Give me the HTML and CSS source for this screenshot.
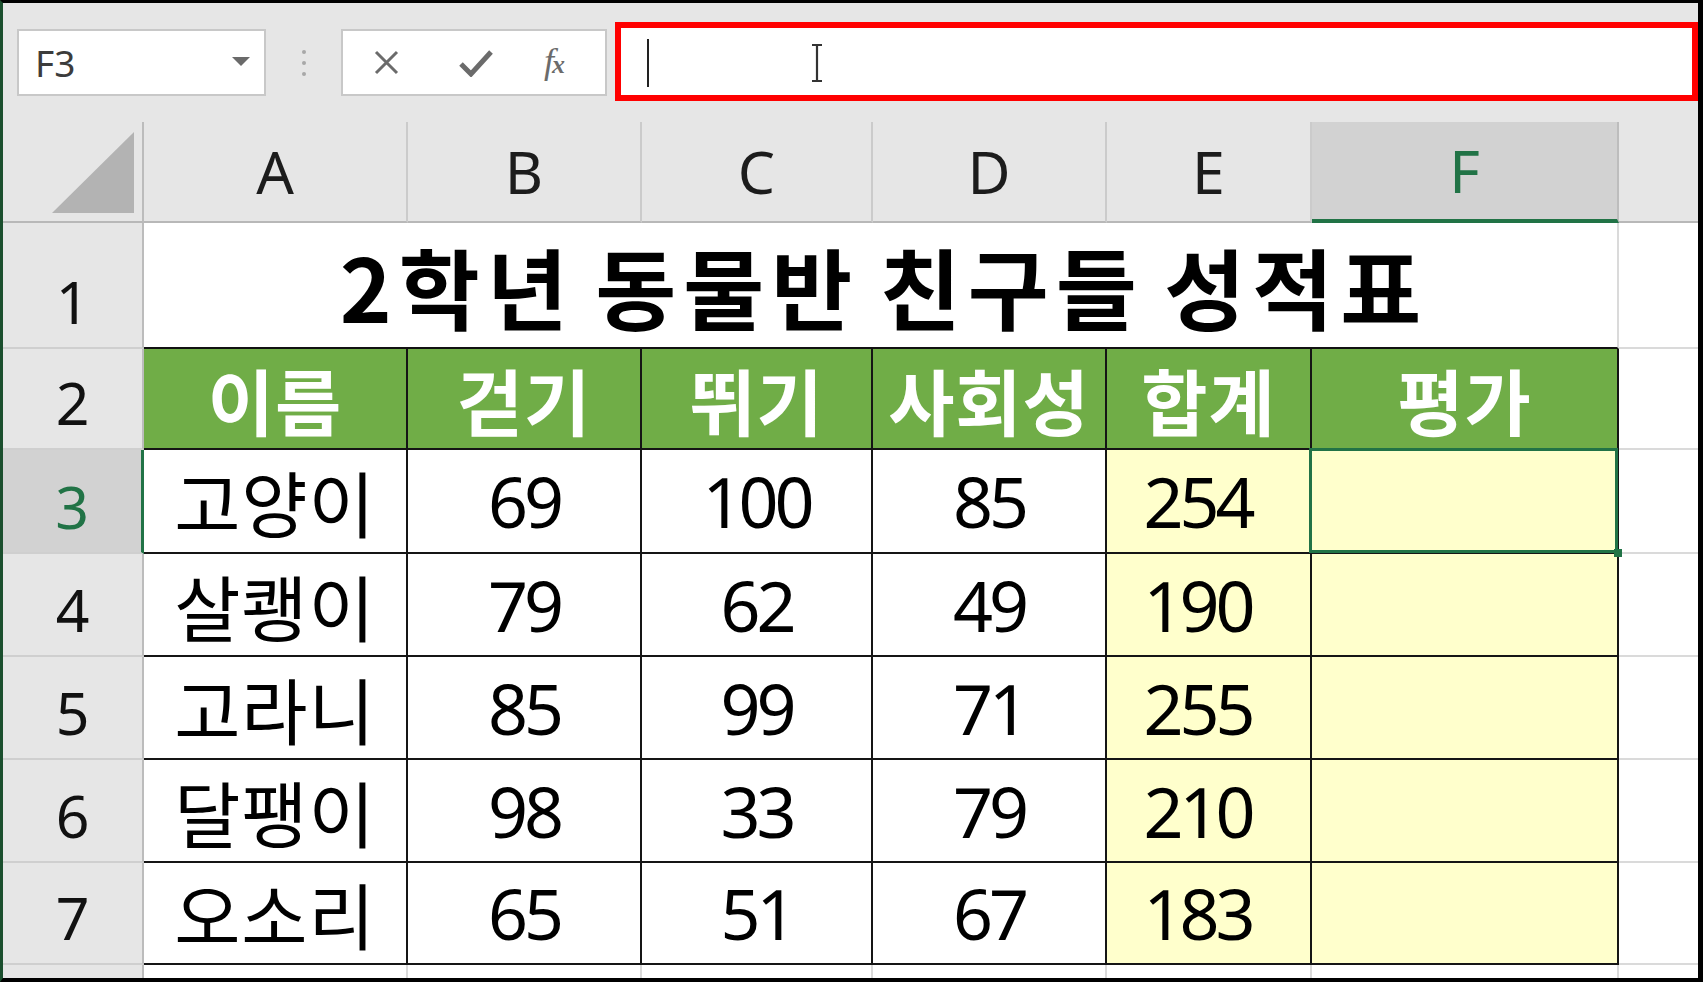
FILE: index.html
```html
<!DOCTYPE html>
<html lang="ko">
<head>
<meta charset="utf-8">
<title>2학년 동물반 친구들 성적표</title>
<link rel="stylesheet" href="styles.css">
</head>
<body>
<div class="window">
  <div class="toolbar">
    <div class="namebox">
      <span class="nb-text">F3</span>
      <svg class="nb-arrow" width="18" height="9" viewBox="0 0 18 9"><polygon points="0,0 18,0 9,9" fill="#6a6a6a"/></svg>
    </div>
    <div class="grip"><span></span><span></span><span></span></div>
    <div class="fbtns">
      <svg class="ic-x" width="27" height="27" viewBox="0 0 27 27"><path d="M3 3 L24 24 M24 3 L3 24" stroke="#6b6b6b" stroke-width="3" fill="none"/></svg>
      <svg class="ic-ok" width="36" height="28" viewBox="0 0 36 28"><path d="M3 15 L13 25 L33 3" stroke="#6b6b6b" stroke-width="5" fill="none" stroke-linejoin="miter"/></svg>
      <span class="fx"><i>f</i><i class="fx-x">x</i></span>
    </div>
    <div class="finput">
      <span class="caret"></span>
      <svg class="ibeam" width="12" height="40" viewBox="0 0 12 40"><path d="M1 2 H11 M6 2 V38 M1 38 H11" stroke="#333" stroke-width="2.2" fill="none"/></svg>
    </div>
  </div>

  <div class="sheet">
    <!-- column headers -->
    <div class="c corner"><svg width="82" height="81" viewBox="0 0 82 81"><polygon points="82,0 82,81 0,81" fill="#b3b3b3"/></svg></div>
    <div class="c ch">A</div>
    <div class="c ch">B</div>
    <div class="c ch">C</div>
    <div class="c ch">D</div>
    <div class="c ch">E</div>
    <div class="c ch on">F</div>
    <div class="c chx"></div>

    <!-- row 1 -->
    <div class="c rh">1</div>
    <div class="c title">2학년 동물반 친구들 성적표</div>
    <div class="c x"></div>

    <!-- row 2 -->
    <div class="c rh">2</div>
    <div class="c hd">이름</div>
    <div class="c hd">걷기</div>
    <div class="c hd">뛰기</div>
    <div class="c hd">사회성</div>
    <div class="c hd">합계</div>
    <div class="c hd">평가</div>
    <div class="c x"></div>

    <!-- row 3 -->
    <div class="c rh on">3</div>
    <div class="c d name">고양이</div>
    <div class="c d num">69</div>
    <div class="c d num">100</div>
    <div class="c d num">85</div>
    <div class="c d num sum">254</div>
    <div class="c d eval sel"><span class="selbox"></span><span class="handle"></span></div>
    <div class="c x"></div>

    <!-- row 4 -->
    <div class="c rh">4</div>
    <div class="c d name">살쾡이</div>
    <div class="c d num">79</div>
    <div class="c d num">62</div>
    <div class="c d num">49</div>
    <div class="c d num sum">190</div>
    <div class="c d eval"></div>
    <div class="c x"></div>

    <!-- row 5 -->
    <div class="c rh">5</div>
    <div class="c d name">고라니</div>
    <div class="c d num">85</div>
    <div class="c d num">99</div>
    <div class="c d num">71</div>
    <div class="c d num sum">255</div>
    <div class="c d eval"></div>
    <div class="c x"></div>

    <!-- row 6 -->
    <div class="c rh">6</div>
    <div class="c d name">달팽이</div>
    <div class="c d num">98</div>
    <div class="c d num">33</div>
    <div class="c d num">79</div>
    <div class="c d num sum">210</div>
    <div class="c d eval"></div>
    <div class="c x"></div>

    <!-- row 7 -->
    <div class="c rh">7</div>
    <div class="c d name">오소리</div>
    <div class="c d num">65</div>
    <div class="c d num">51</div>
    <div class="c d num">67</div>
    <div class="c d num sum">183</div>
    <div class="c d eval"></div>
    <div class="c x"></div>

    <!-- row 8 (partial) -->
    <div class="c rh"></div>
    <div class="c r8"></div>
    <div class="c r8"></div>
    <div class="c r8"></div>
    <div class="c r8"></div>
    <div class="c r8"></div>
    <div class="c r8"></div>
    <div class="c r8 last"></div>
  </div>
</div>
</body>
</html>
```

FILE: styles.css
```css
html, body {
  margin: 0;
  padding: 0;
  background: #ffffff;
}

body {
  font-family: "Noto Sans", "Noto Sans CJK KR", sans-serif;
}

.window {
  width: 1703px;
  height: 982px;
  box-sizing: border-box;
  border-top: 3px solid #000;
  border-right: 5px solid #000;
  border-bottom: 4px solid #000;
  border-left: 3px solid #1b4f2e;
  display: flex;
  flex-direction: column;
  overflow: hidden;
  background: #fff;
}

/* ---------- formula bar ---------- */
.toolbar {
  height: 119px;
  flex: none;
  box-sizing: border-box;
  background: #e6e6e6;
  display: flex;
  align-items: flex-start;
  padding: 26px 0 0 14px;
}

.namebox {
  width: 249px;
  height: 67px;
  box-sizing: border-box;
  border: 2px solid #c8c8c8;
  background: #fff;
  display: flex;
  align-items: center;
  padding: 0 14px 0 16px;
}

.nb-text {
  font-family: "Noto Sans", sans-serif;
  font-size: 37px;
  line-height: 1;
  color: #3c3c3c;
}

.nb-arrow {
  margin-left: auto;
  margin-top: -2px;
}

.grip {
  width: 75px;
  height: 67px;
  display: flex;
  flex-direction: column;
  align-items: center;
  justify-content: center;
  gap: 7px;
}

.grip span {
  width: 4px;
  height: 4px;
  border-radius: 50%;
  background: #a8a8a8;
}

.fbtns {
  width: 266px;
  height: 67px;
  box-sizing: border-box;
  border: 2px solid #c8c8c8;
  background: #fff;
  display: flex;
  align-items: center;
  padding-left: 30px;
}

.ic-ok {
  margin-left: 58px;
}

.fx {
  margin-left: 50px;
  font-family: "Liberation Serif", "DejaVu Serif", serif;
  font-size: 36px;
  color: #6b6b6b;
  line-height: 1;
  letter-spacing: -2px;
  margin-top: -4px;
}

.fx-x {
  font-size: 26px;
  font-weight: 700;
}

.finput {
  flex: 1;
  height: 79px;
  margin-left: 8px;
  margin-top: -7px;
  box-sizing: border-box;
  border: 6px solid #ff0000;
  background: #fff;
  display: flex;
  align-items: flex-start;
  padding-left: 26px;
}

.caret {
  width: 2px;
  height: 48px;
  margin-top: 11px;
  background: #222;
}

.ibeam {
  margin-left: 162px;
  margin-top: 15px;
}

/* ---------- sheet grid ---------- */
.sheet {
  flex: 1;
  display: grid;
  grid-template-columns: 141px 264px 234px 231px 234px 205px 307px 1fr;
  grid-template-rows: 101px 126px 101px 104px 103px 103px 103px 102px 1fr;
  min-height: 0;
}

.c {
  box-sizing: border-box;
  display: flex;
  align-items: center;
  justify-content: center;
  line-height: 1;
  min-width: 0;
  min-height: 0;
  white-space: nowrap;
}

.corner {
  background: #e6e6e6;
  border-right: 2px solid #bcbcbc;
  border-bottom: 2px solid #b8b8b8;
  align-items: flex-end;
  justify-content: flex-end;
  padding: 0 8px 8px 0;
}

.ch {
  background: #e6e6e6;
  border-right: 2px solid #cbcbcb;
  border-bottom: 2px solid #b8b8b8;
  font-size: 59px;
  color: #1c1c1c;
}

.ch.on {
  background: #d2d2d2;
  color: #217346;
  border-right-color: #bdbdbd;
  border-bottom: 4px solid #217346;
}

.chx {
  background: #e6e6e6;
  border-bottom: 2px solid #b8b8b8;
}

.rh {
  background: #e6e6e6;
  border-right: 2px solid #bcbcbc;
  border-bottom: 2px solid #cfcfcf;
  align-items: flex-end;
  padding-bottom: 16px;
  font-size: 59px;
  color: #111;
}

.rh.on {
  background: #d2d2d2;
  color: #217346;
  border-right: 3px solid #217346;
}

.title {
  grid-column: span 6;
  background: #fff;
  border-right: 2px solid #dadada;
  border-bottom: 2px solid #111;
  font-family: "Noto Sans CJK KR", "Noto Sans", sans-serif;
  font-size: 88px;
  font-weight: 700;
  letter-spacing: 7px;
  word-spacing: -11px;
  padding-left: 7px;
  color: #000;
}

.hd {
  background: #70ad47;
  color: #fff;
  font-family: "Noto Sans CJK KR", sans-serif;
  font-weight: 700;
  font-size: 72px;
  letter-spacing: 1px;
  border-right: 2px solid #151515;
  border-bottom: 2px solid #151515;
}

.d {
  background: #fff;
  border-right: 2px solid #151515;
  border-bottom: 2px solid #151515;
  color: #000;
}

.name {
  font-family: "Noto Sans CJK KR", sans-serif;
  font-size: 72px;
  letter-spacing: 1px;
}

.num {
  font-family: "Noto Sans", sans-serif;
  font-size: 70px;
  letter-spacing: -4px;
}

.sum {
  background: #ffffcc;
  padding-right: 22px;
}

.eval {
  background: #ffffcc;
}

.sel {
  position: relative;
}

.selbox {
  position: absolute;
  left: -3px;
  top: -2px;
  right: -1px;
  bottom: -1px;
  border: 3px solid #217346;
}

.handle {
  position: absolute;
  right: -5px;
  bottom: -5px;
  width: 8px;
  height: 8px;
  background: #217346;
}

.x {
  background: #fff;
  border-bottom: 2px solid #dadada;
}

.r8 {
  background: #fff;
  border-right: 2px solid #dadada;
}

.r8.last {
  border-right: none;
}
```
